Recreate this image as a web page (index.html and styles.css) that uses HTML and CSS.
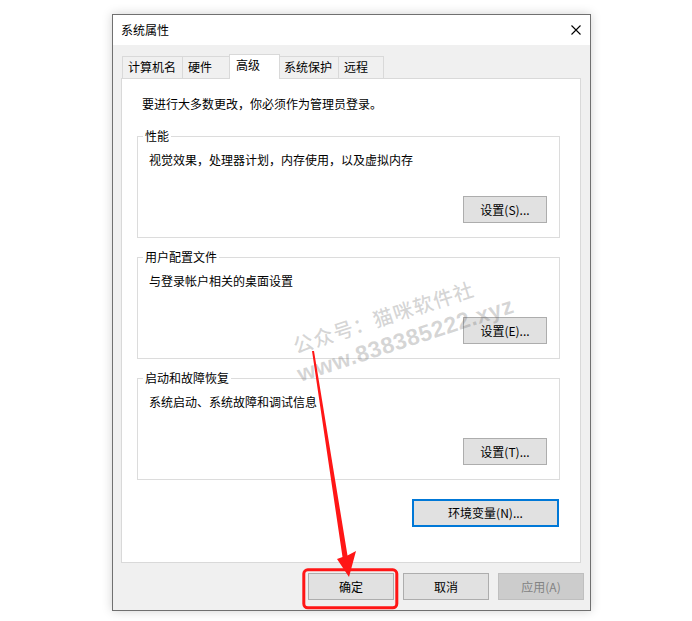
FILE: index.html
```html
<!DOCTYPE html>
<html lang="zh-CN">
<head>
<meta charset="utf-8">
<title>系统属性</title>
<link rel="stylesheet" href="styles.css">
</head>
<body>
<div class="window">
  <div class="titlebar">
    <span class="title">系统属性</span>
    <svg class="close" width="10" height="10" viewBox="0 0 10 10"><path d="M0.5 0.5L9.5 9.5M9.5 0.5L0.5 9.5" stroke="#000" stroke-width="1.1" fill="none"/></svg>
  </div>
  <div class="body">
    <div class="tabs">
      <div class="tab tab-1">计算机名</div>
      <div class="tab tab-2">硬件</div>
      <div class="tab tab-3 active">高级</div>
      <div class="tab tab-4">系统保护</div>
      <div class="tab tab-5">远程</div>
    </div>
    <div class="panel">
      <div class="intro">要进行大多数更改，你必须作为管理员登录。</div>
      <div class="group">
        <div class="group-title">性能</div>
        <div class="group-desc">视觉效果，处理器计划，内存使用，以及虚拟内存</div>
        <button class="btn btn-set">设置(S)...</button>
      </div>
      <div class="group">
        <div class="group-title">用户配置文件</div>
        <div class="group-desc">与登录帐户相关的桌面设置</div>
        <button class="btn btn-set">设置(E)...</button>
      </div>
      <div class="group">
        <div class="group-title">启动和故障恢复</div>
        <div class="group-desc">系统启动、系统故障和调试信息</div>
        <button class="btn btn-set">设置(T)...</button>
      </div>
      <div class="env-row">
        <button class="btn btn-env">环境变量(N)...</button>
      </div>
    </div>
    <div class="actions">
      <button class="btn btn-action">确定</button>
      <button class="btn btn-action">取消</button>
      <button class="btn btn-action disabled">应用(A)</button>
    </div>
  </div>
</div>

<div class="watermark">
  <div class="wm-line wm-cn">公众号：猫咪软件社</div>
  <div class="wm-line wm-url">www.838385222.xyz</div>
</div>

<svg class="annotation" width="692" height="621" viewBox="0 0 692 621">
  <rect x="303.8" y="569.8" width="93" height="38" rx="4" ry="4" fill="none" stroke="#ff1616" stroke-width="3"/>
  <polygon points="312,351 314,351 347.5,555.5 356,551 349,577 337,559 342.5,557" fill="#ff1616"/>
</svg>
</body>
</html>
```
FILE: styles.css
```css
* { box-sizing: border-box; }

html, body {
  margin: 0;
  padding: 0;
  background: #ffffff;
}

body {
  width: 692px;
  height: 621px;
  overflow: hidden;
  position: relative;
  font-family: "Noto Sans CJK SC", "Microsoft YaHei", sans-serif;
  font-size: 12px;
  color: #000;
}

.window {
  margin: 14px 0 0 112px;
  width: 479px;
  height: 597px;
  border: 1px solid #707070;
  background: #f0f0f0;
  box-shadow: 0 0 10px rgba(0, 0, 0, 0.18);
  display: flex;
  flex-direction: column;
}

.titlebar {
  height: 30px;
  background: #ffffff;
  display: flex;
  align-items: center;
  justify-content: space-between;
  padding: 0 9px 0 8px;
}

.title {
  line-height: 16px;
}

.close {
  display: block;
  margin-top: -1px;
}

.body {
  flex: 1;
  padding: 9px 0 0 8px;
}

.tabs {
  display: flex;
  align-items: flex-end;
  padding-left: 1px;
  margin-bottom: -1px;
  position: relative;
  z-index: 1;
  height: 25px;
}

.tab {
  height: 22px;
  margin-bottom: 1px;
  border: 1px solid #d9d9d9;
  border-bottom: none;
  background: #f0f0f0;
  line-height: 20px;
  padding-left: 5px;
  white-space: nowrap;
}

.tab + .tab { margin-left: -1px; }

.tab-1 { width: 61px; }
.tab-2 { width: 48px; }
.tab-3 { width: 51px; }
.tab-4 { width: 60px; padding-left: 4px; }
.tab-5 { width: 46px; }

.tab.active {
  height: 25px;
  margin-bottom: 0;
  background: #ffffff;
  padding-left: 6px;
  line-height: 20px;
  position: relative;
  z-index: 2;
}

.panel {
  width: 460px;
  height: 485px;
  background: #ffffff;
  border: 1px solid #d9d9d9;
  padding-top: 17px;
}

.intro {
  margin-left: 20px;
  line-height: 16px;
}

.group {
  margin: 19px 0 0 15px;
  width: 423px;
  height: 102px;
  border: 1px solid #dcdcdc;
  display: flex;
  flex-direction: column;
  padding: 0 12px 0 0;
}

.panel .intro + .group { margin-top: 24px; }

.group-title {
  align-self: flex-start;
  margin: -9px 0 0 5px;
  padding: 0 2px;
  background: #ffffff;
  line-height: 16px;
}

.group-desc {
  margin: 8px 0 0 11px;
  line-height: 16px;
}

.btn {
  font-family: "Noto Sans CJK SC", "Microsoft YaHei", sans-serif;
  font-size: 12px;
  color: #000;
  background: #e1e1e1;
  border: 1px solid #adadad;
  padding: 0;
  line-height: 16px;
  margin: 0;
}

.btn-set {
  align-self: flex-end;
  margin-top: 28px;
  width: 84px;
  height: 27px;
}

.env-row {
  display: flex;
  justify-content: flex-end;
  margin: 19px 21px 0 0;
}

.btn-env {
  width: 147px;
  height: 28px;
  border: 2px solid #0078d7;
}

.actions {
  display: flex;
  justify-content: flex-end;
  gap: 9px;
  margin-top: 10px;
  padding-right: 6px;
}

.btn-action {
  width: 86px;
  height: 27px;
}

.btn-action.disabled {
  background: #cccccc;
  border-color: #bfbfbf;
  color: #838383;
}

.watermark {
  position: absolute;
  left: 401px;
  top: 326px;
  transform: translate(-50%, -50%) rotate(-18deg);
  text-align: center;
  white-space: nowrap;
  pointer-events: none;
  color: rgba(90, 90, 90, 0.25);
}

.wm-line {
  line-height: 28px;
}

.wm-cn {
  font-family: "Noto Sans CJK SC", sans-serif;
  font-size: 20px;
  font-weight: 500;
  letter-spacing: 1px;
  margin-left: -28px;
}

.wm-url {
  font-family: "Liberation Sans", Arial, sans-serif;
  font-size: 23px;
  font-weight: 700;
  letter-spacing: 0.5px;
}

.annotation {
  position: absolute;
  left: 0;
  top: 0;
  pointer-events: none;
}
```
